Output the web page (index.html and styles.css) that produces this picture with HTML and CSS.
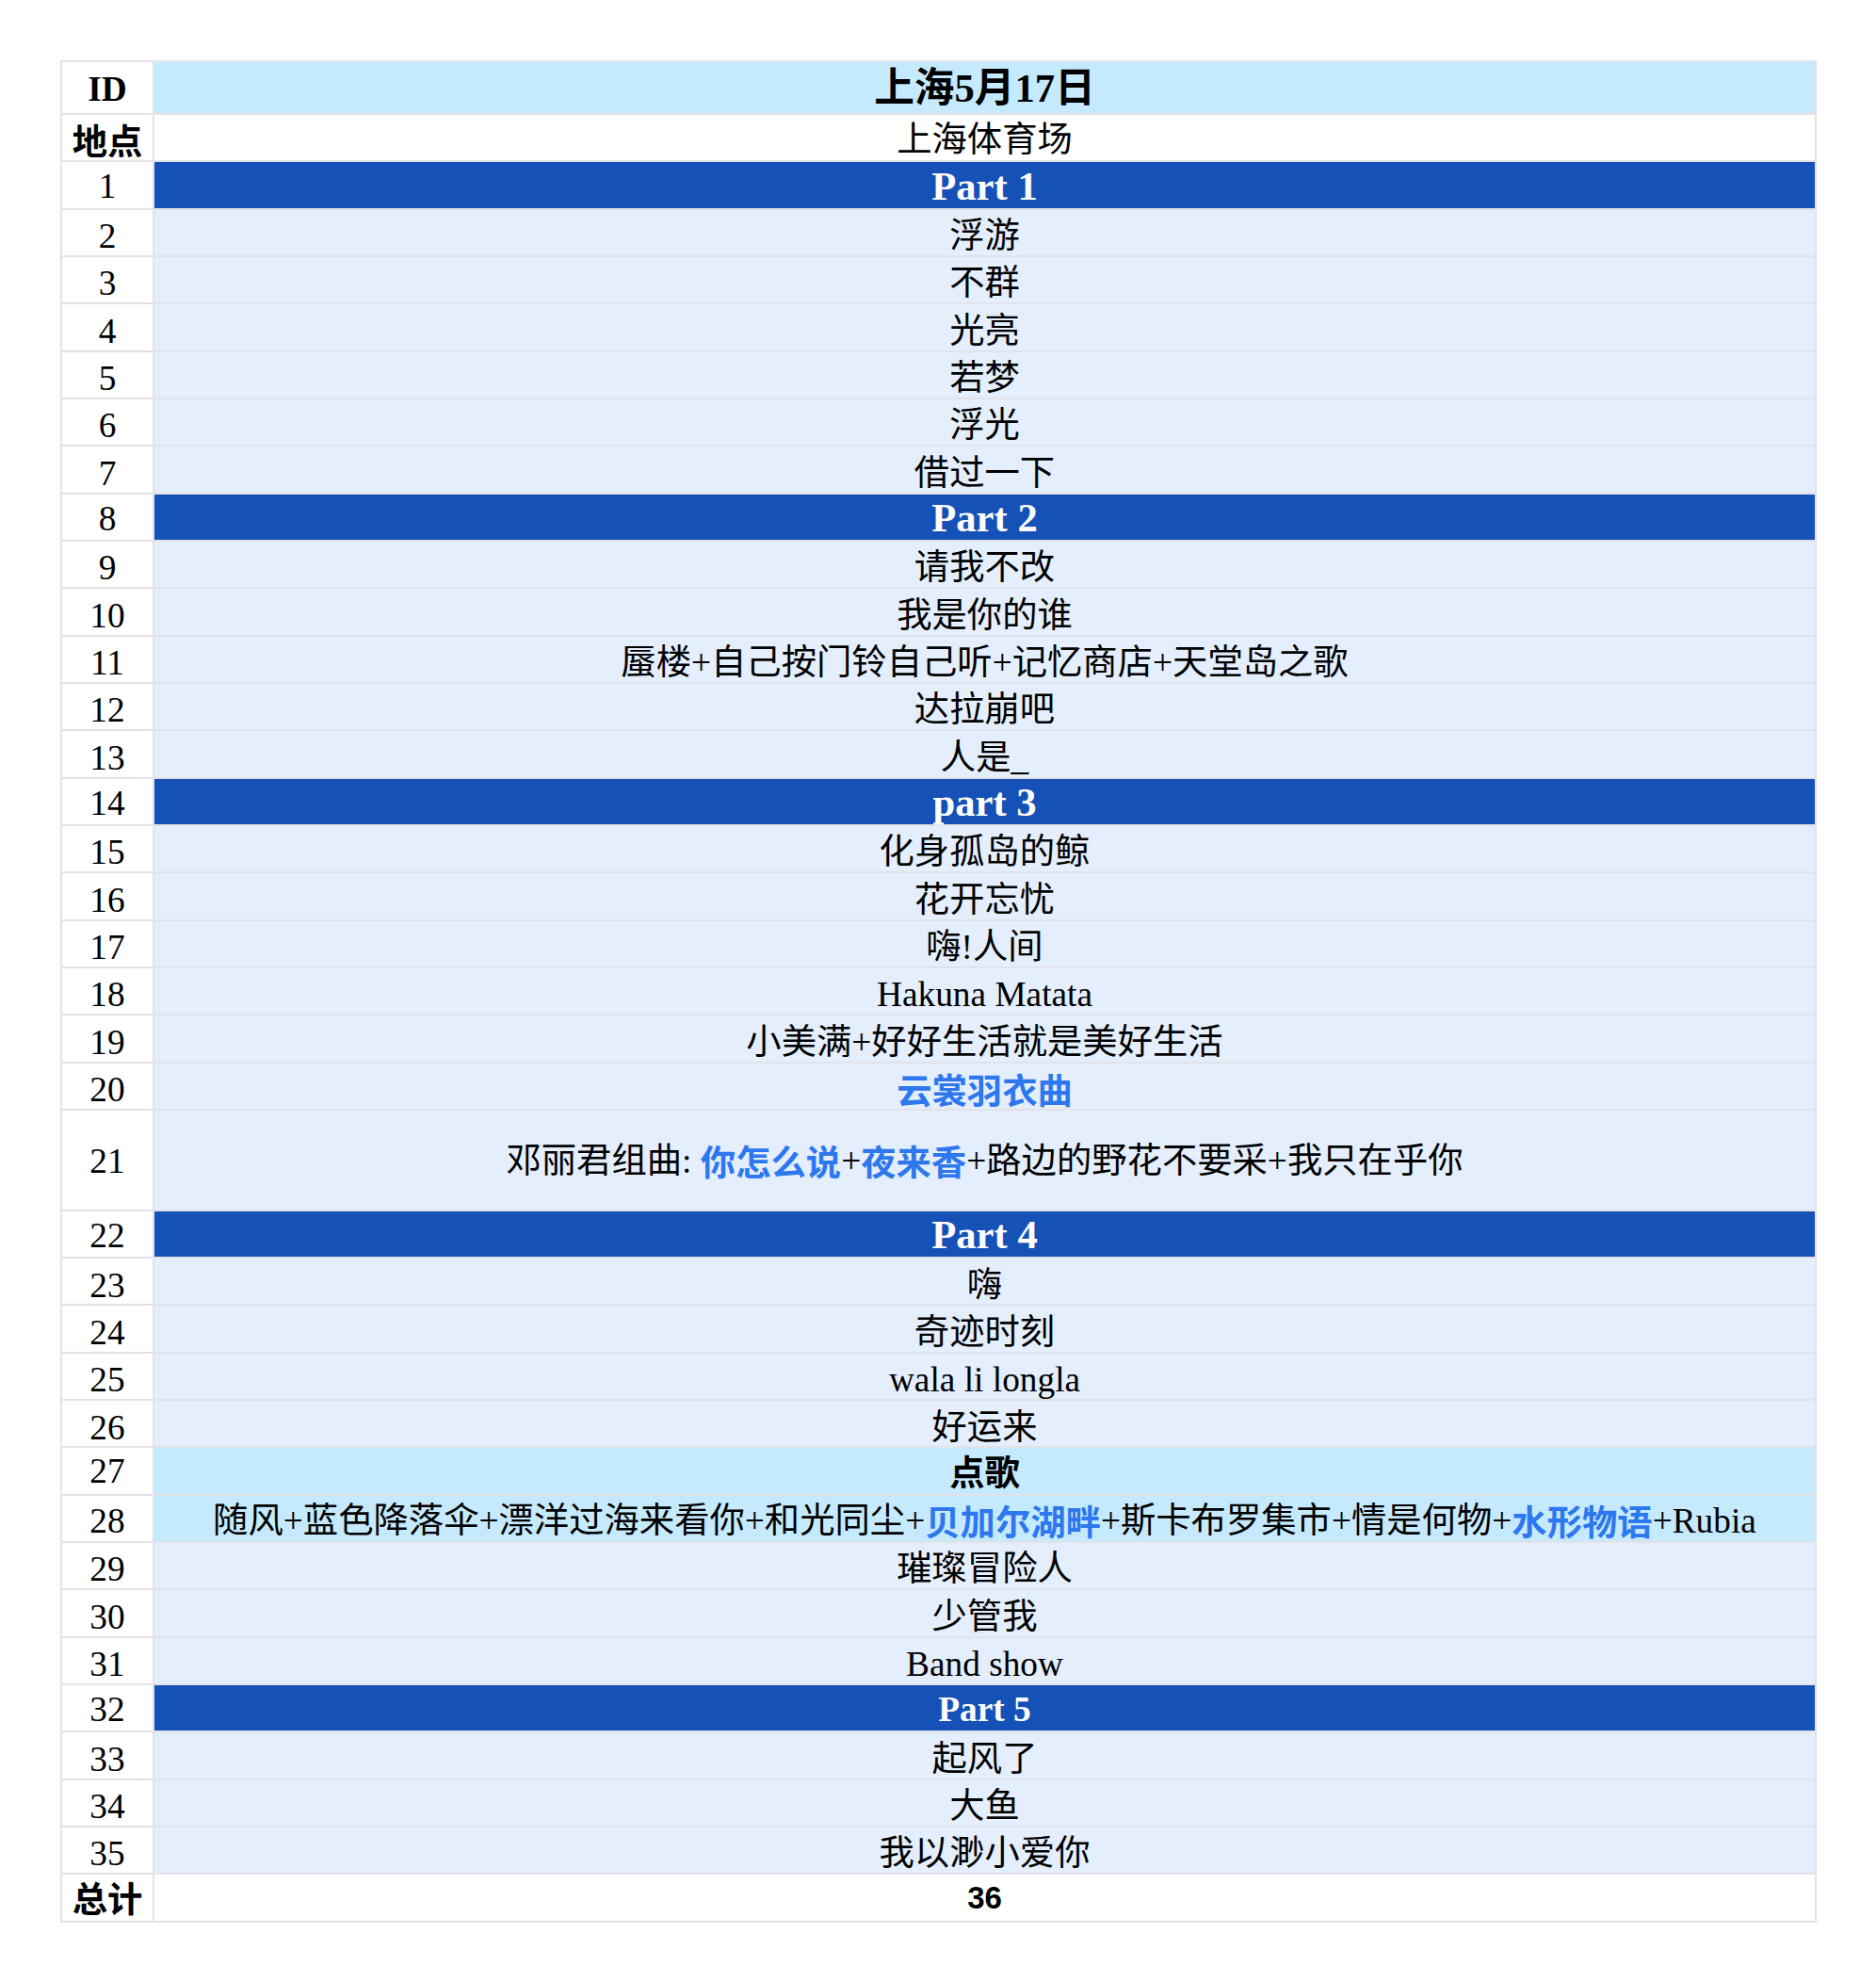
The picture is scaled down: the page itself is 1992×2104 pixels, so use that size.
FILE: index.html
```html
<!DOCTYPE html>
<html lang="zh-CN">
<head>
<meta charset="utf-8">
<title>上海5月17日</title>
<link rel="stylesheet" href="styles.css">
</head>
<body>
<div class="setlist">
  <div class="row r-head"><div class="id th">ID</div><div class="main title">上海5月17日</div></div>
  <div class="row r-white r-venue"><div class="id lbl">地点</div><div class="main">上海体育场</div></div>
  <div class="row r-part"><div class="id">1</div><div class="main">Part 1</div></div>
  <div class="row r-song"><div class="id">2</div><div class="main">浮游</div></div>
  <div class="row r-song"><div class="id">3</div><div class="main">不群</div></div>
  <div class="row r-song"><div class="id">4</div><div class="main">光亮</div></div>
  <div class="row r-song"><div class="id">5</div><div class="main">若梦</div></div>
  <div class="row r-song"><div class="id">6</div><div class="main">浮光</div></div>
  <div class="row r-song"><div class="id">7</div><div class="main">借过一下</div></div>
  <div class="row r-part"><div class="id">8</div><div class="main">Part 2</div></div>
  <div class="row r-song"><div class="id">9</div><div class="main">请我不改</div></div>
  <div class="row r-song"><div class="id">10</div><div class="main">我是你的谁</div></div>
  <div class="row r-song"><div class="id">11</div><div class="main">蜃楼+自己按门铃自己听+记忆商店+天堂岛之歌</div></div>
  <div class="row r-song"><div class="id">12</div><div class="main">达拉崩吧</div></div>
  <div class="row r-song"><div class="id">13</div><div class="main">人是_</div></div>
  <div class="row r-part"><div class="id">14</div><div class="main">part 3</div></div>
  <div class="row r-song"><div class="id">15</div><div class="main">化身孤岛的鲸</div></div>
  <div class="row r-song"><div class="id">16</div><div class="main">花开忘忧</div></div>
  <div class="row r-song"><div class="id">17</div><div class="main">嗨!人间</div></div>
  <div class="row r-song"><div class="id">18</div><div class="main">Hakuna Matata</div></div>
  <div class="row r-song"><div class="id">19</div><div class="main">小美满+好好生活就是美好生活</div></div>
  <div class="row r-song"><div class="id">20</div><div class="main"><b class="hl">云裳羽衣曲</b></div></div>
  <div class="row r-song r-tall"><div class="id">21</div><div class="main">邓丽君组曲:&nbsp;<b class="hl">你怎么说</b>+<b class="hl">夜来香</b>+路边的野花不要采+我只在乎你</div></div>
  <div class="row r-part"><div class="id">22</div><div class="main">Part 4</div></div>
  <div class="row r-song"><div class="id">23</div><div class="main">嗨</div></div>
  <div class="row r-song"><div class="id">24</div><div class="main">奇迹时刻</div></div>
  <div class="row r-song"><div class="id">25</div><div class="main">wala li longla</div></div>
  <div class="row r-song"><div class="id">26</div><div class="main">好运来</div></div>
  <div class="row r-req"><div class="id">27</div><div class="main"><b class="req">点歌</b></div></div>
  <div class="row r-req r-req-list"><div class="id">28</div><div class="main">随风+蓝色降落伞+漂洋过海来看你+和光同尘+<b class="hl">贝加尔湖畔</b>+斯卡布罗集市+情是何物+<b class="hl">水形物语</b>+Rubia</div></div>
  <div class="row r-song"><div class="id">29</div><div class="main">璀璨冒险人</div></div>
  <div class="row r-song"><div class="id">30</div><div class="main">少管我</div></div>
  <div class="row r-song"><div class="id">31</div><div class="main">Band show</div></div>
  <div class="row r-part r-part-sm"><div class="id">32</div><div class="main">Part 5</div></div>
  <div class="row r-song"><div class="id">33</div><div class="main">起风了</div></div>
  <div class="row r-song"><div class="id">34</div><div class="main">大鱼</div></div>
  <div class="row r-song"><div class="id">35</div><div class="main">我以渺小爱你</div></div>
  <div class="row r-white r-total"><div class="id lbl">总计</div><div class="main sum">36</div></div>
</div>
</body>
</html>
```
FILE: styles.css
```css
html, body {
  margin: 0;
  padding: 0;
  background: #ffffff;
}

.setlist {
  margin: 64px 0 0 64px;
  width: 1865px;
  box-sizing: border-box;
  padding: 2px;
  display: flex;
  flex-direction: column;
  gap: 2px;
  background: #e2e2e8;
  font-family: "Liberation Serif", "Noto Sans CJK SC", serif;
  font-size: 37.33px;
  line-height: 1;
  color: #000000;
}

.row {
  display: grid;
  grid-template-columns: 96px 1fr;
  grid-template-rows: 100%;
  column-gap: 2px;
  height: 48.33px;
  flex: none;
}

.row > div {
  display: flex;
  align-items: center;
  justify-content: center;
  white-space: nowrap;
  background: #ffffff;
  box-sizing: border-box;
}

.r-song > div { padding-top: 8px; }

.r-venue > div { padding-top: 4px; }

.r-part > div { padding-top: 3px; }

.r-req-list > div { padding-top: 5px; }

.r-song.r-tall > div { padding-top: 3px; }

.id.th { font-weight: bold; }

.id.lbl {
  font-family: "Noto Sans CJK SC", sans-serif;
  font-weight: bold;
}

.r-head { height: 54px; }

.r-head > div { padding-top: 3px; }

.r-head .title {
  background: #c6eafd;
  font-weight: bold;
  font-size: 42.67px;
}

.r-part .main {
  background: #1551b7;
  color: #ffffff;
  font-weight: bold;
  font-size: 42.67px;
}

.r-part-sm .main { font-size: 37.33px; }

.r-song .main { background: #e4eefd; }

.r-req .main { background: #c6eafd; }

.row.r-tall { height: 104.8px; }

.hl {
  color: #2d77ef;
  font-family: "Noto Sans CJK SC", sans-serif;
  font-weight: bold;
}

.req {
  font-family: "Noto Sans CJK SC", sans-serif;
  font-weight: bold;
}

.main.sum {
  font-family: "Liberation Sans", sans-serif;
  font-weight: bold;
  font-size: 33px;
}
```
